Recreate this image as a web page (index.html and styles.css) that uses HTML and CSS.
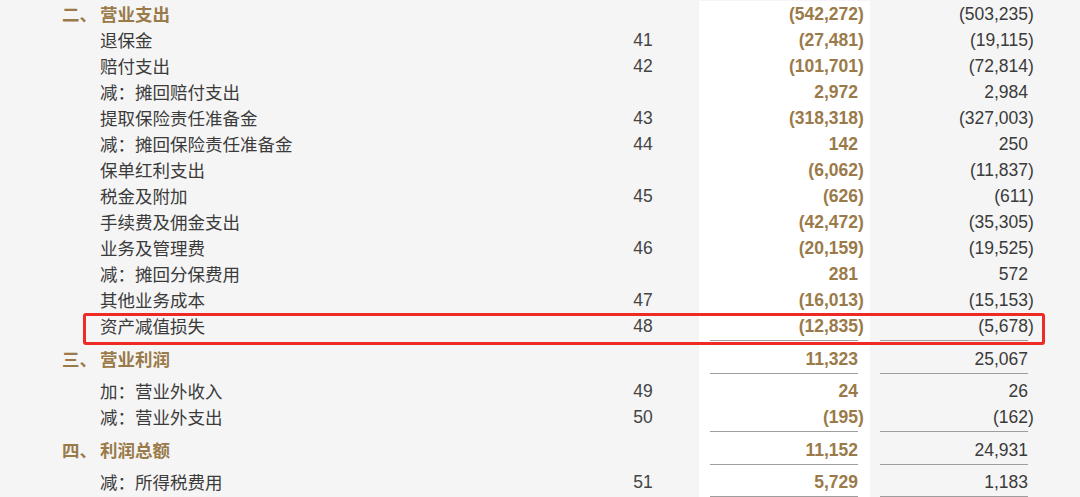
FILE: index.html
```html
<!DOCTYPE html>
<html lang="zh-CN">
<head>
<meta charset="utf-8">
<title>利润表</title>
<link rel="stylesheet" href="styles.css">
</head>
<body>
<div class="sheet">
  <div class="row head">
    <div class="label"><span class="ord">二、</span>营业支出</div>
    <div class="note"></div>
    <div class="cur"><div class="v"><span class="neg">(542,272)</span></div></div>
    <div class="pri"><div class="v"><span class="neg">(503,235)</span></div></div>
  </div>
  <div class="row">
    <div class="label">退保金</div>
    <div class="note">41</div>
    <div class="cur"><div class="v"><span class="neg">(27,481)</span></div></div>
    <div class="pri"><div class="v"><span class="neg">(19,115)</span></div></div>
  </div>
  <div class="row">
    <div class="label">赔付支出</div>
    <div class="note">42</div>
    <div class="cur"><div class="v"><span class="neg">(101,701)</span></div></div>
    <div class="pri"><div class="v"><span class="neg">(72,814)</span></div></div>
  </div>
  <div class="row">
    <div class="label">减：摊回赔付支出</div>
    <div class="note"></div>
    <div class="cur"><div class="v"><span>2,972</span></div></div>
    <div class="pri"><div class="v"><span>2,984</span></div></div>
  </div>
  <div class="row">
    <div class="label">提取保险责任准备金</div>
    <div class="note">43</div>
    <div class="cur"><div class="v"><span class="neg">(318,318)</span></div></div>
    <div class="pri"><div class="v"><span class="neg">(327,003)</span></div></div>
  </div>
  <div class="row">
    <div class="label">减：摊回保险责任准备金</div>
    <div class="note">44</div>
    <div class="cur"><div class="v"><span>142</span></div></div>
    <div class="pri"><div class="v"><span>250</span></div></div>
  </div>
  <div class="row">
    <div class="label">保单红利支出</div>
    <div class="note"></div>
    <div class="cur"><div class="v"><span class="neg">(6,062)</span></div></div>
    <div class="pri"><div class="v"><span class="neg">(11,837)</span></div></div>
  </div>
  <div class="row">
    <div class="label">税金及附加</div>
    <div class="note">45</div>
    <div class="cur"><div class="v"><span class="neg">(626)</span></div></div>
    <div class="pri"><div class="v"><span class="neg">(611)</span></div></div>
  </div>
  <div class="row">
    <div class="label">手续费及佣金支出</div>
    <div class="note"></div>
    <div class="cur"><div class="v"><span class="neg">(42,472)</span></div></div>
    <div class="pri"><div class="v"><span class="neg">(35,305)</span></div></div>
  </div>
  <div class="row">
    <div class="label">业务及管理费</div>
    <div class="note">46</div>
    <div class="cur"><div class="v"><span class="neg">(20,159)</span></div></div>
    <div class="pri"><div class="v"><span class="neg">(19,525)</span></div></div>
  </div>
  <div class="row">
    <div class="label">减：摊回分保费用</div>
    <div class="note"></div>
    <div class="cur"><div class="v"><span>281</span></div></div>
    <div class="pri"><div class="v"><span>572</span></div></div>
  </div>
  <div class="row">
    <div class="label">其他业务成本</div>
    <div class="note">47</div>
    <div class="cur"><div class="v"><span class="neg">(16,013)</span></div></div>
    <div class="pri"><div class="v"><span class="neg">(15,153)</span></div></div>
  </div>
  <div class="row ul marked">
    <div class="label">资产减值损失</div>
    <div class="note">48</div>
    <div class="cur"><div class="v"><span class="neg">(12,835)</span></div></div>
    <div class="pri"><div class="v"><span class="neg">(5,678)</span></div></div>
    <div class="highlight"></div>
  </div>
  <div class="row head ul">
    <div class="label"><span class="ord">三、</span>营业利润</div>
    <div class="note"></div>
    <div class="cur"><div class="v"><span>11,323</span></div></div>
    <div class="pri"><div class="v"><span>25,067</span></div></div>
  </div>
  <div class="row">
    <div class="label">加：营业外收入</div>
    <div class="note">49</div>
    <div class="cur"><div class="v"><span>24</span></div></div>
    <div class="pri"><div class="v"><span>26</span></div></div>
  </div>
  <div class="row ul">
    <div class="label">减：营业外支出</div>
    <div class="note">50</div>
    <div class="cur"><div class="v"><span class="neg">(195)</span></div></div>
    <div class="pri"><div class="v"><span class="neg">(162)</span></div></div>
  </div>
  <div class="row head ul">
    <div class="label"><span class="ord">四、</span>利润总额</div>
    <div class="note"></div>
    <div class="cur"><div class="v"><span>11,152</span></div></div>
    <div class="pri"><div class="v"><span>24,931</span></div></div>
  </div>
  <div class="row ul">
    <div class="label">减：所得税费用</div>
    <div class="note">51</div>
    <div class="cur"><div class="v"><span>5,729</span></div></div>
    <div class="pri"><div class="v"><span>1,183</span></div></div>
  </div>
</div>
</body>
</html>
```

FILE: styles.css
```css
html, body {
  margin: 0;
  padding: 0;
  background: #f5f5f5;
}

body {
  width: 1080px;
  height: 497px;
  overflow: hidden;
  font-family: "Liberation Sans", "Noto Sans CJK SC", sans-serif;
  font-size: 17.5px;
  color: #3b3b3b;
}

.sheet {
  padding-top: 1px;
}

.row {
  position: relative;
  display: grid;
  grid-template-columns: 600px 99px 171px 1fr;
  height: 26px;
  line-height: 26px;
}

.row.ul {
  height: 32.5px;
}

.label {
  padding-left: 100px;
  font-family: "Noto Sans CJK SC", sans-serif;
  white-space: nowrap;
}

.head .label {
  padding-left: 62px;
  font-weight: 700;
  color: #9a7a49;
}

.ord {
  display: inline-block;
  width: 38px;
}

.note {
  padding-right: 13px;
  text-align: center;
  color: #444;
}

.cur {
  background: #fff;
  padding: 0 12px 0 11px;
}

.pri {
  padding: 0 52px 0 10px;
}

.v {
  text-align: right;
  height: 26px;
  white-space: nowrap;
}

.cur .v {
  font-weight: 700;
  color: #9a7a49;
}

.ul .v {
  padding-bottom: 1px;
  border-bottom: 1px solid #9e9e9e;
}

.neg {
  margin-right: -0.333em;
}

.highlight {
  position: absolute;
  left: 83px;
  top: 0;
  width: 962px;
  height: 32px;
  box-sizing: border-box;
  border: 3px solid #ee2a25;
  border-radius: 3px;
  pointer-events: none;
}
```
